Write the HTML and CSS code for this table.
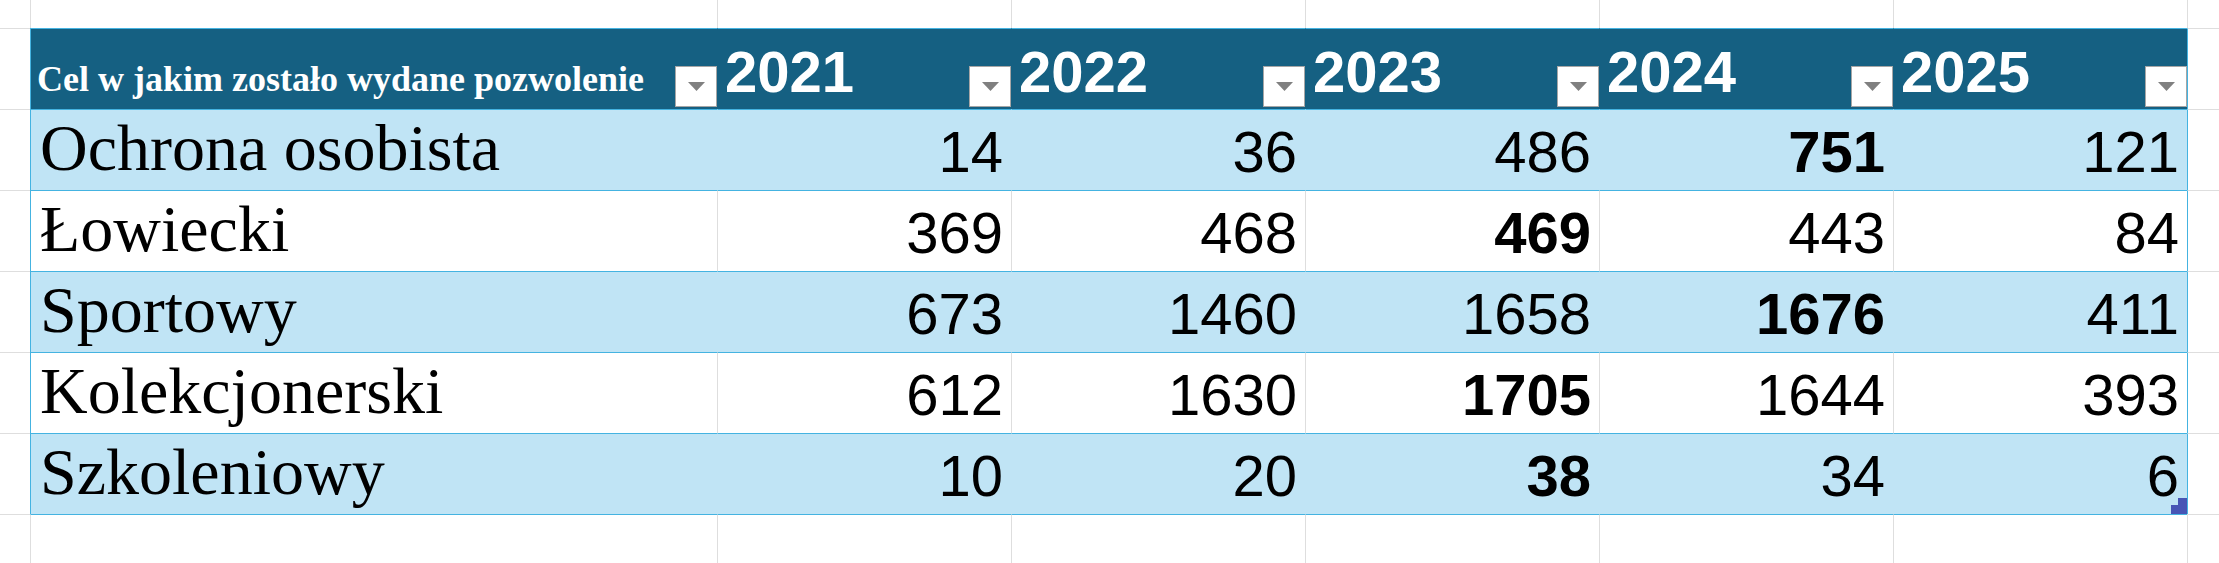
FILE: index.html
```html
<!DOCTYPE html>
<html lang="pl">
<head>
<meta charset="utf-8">
<title>Pozwolenia na broń</title>
<link rel="stylesheet" href="styles.css">
</head>
<body>
<div class="sheet">
  <!-- row 1 (above table) -->
  <div class="c col-a top-row"></div>
  <div class="c top-row"></div>
  <div class="c top-row"></div>
  <div class="c top-row"></div>
  <div class="c top-row"></div>
  <div class="c top-row"></div>
  <div class="c top-row"></div>
  <div class="c top-row"></div>

  <!-- header -->
  <div class="c col-a"></div>
  <div class="c t t-first hdr"><span class="hdr-label">Cel w jakim zostało wydane pozwolenie</span><span class="filter"><svg width="17" height="9" viewBox="0 0 17 9"><path d="M0 0H17L8.5 9Z"/></svg></span></div>
  <div class="c t hdr"><span class="hdr-year">2021</span><span class="filter"><svg width="17" height="9" viewBox="0 0 17 9"><path d="M0 0H17L8.5 9Z"/></svg></span></div>
  <div class="c t hdr"><span class="hdr-year">2022</span><span class="filter"><svg width="17" height="9" viewBox="0 0 17 9"><path d="M0 0H17L8.5 9Z"/></svg></span></div>
  <div class="c t hdr"><span class="hdr-year">2023</span><span class="filter"><svg width="17" height="9" viewBox="0 0 17 9"><path d="M0 0H17L8.5 9Z"/></svg></span></div>
  <div class="c t hdr"><span class="hdr-year">2024</span><span class="filter"><svg width="17" height="9" viewBox="0 0 17 9"><path d="M0 0H17L8.5 9Z"/></svg></span></div>
  <div class="c t hdr"><span class="hdr-year">2025</span><span class="filter"><svg width="17" height="9" viewBox="0 0 17 9"><path d="M0 0H17L8.5 9Z"/></svg></span></div>
  <div class="c t-right"></div>

  <!-- row: Ochrona osobista -->
  <div class="c col-a"></div>
  <div class="c t t-first band lbl">Ochrona osobista</div>
  <div class="c t band num">14</div>
  <div class="c t band num">36</div>
  <div class="c t band num">486</div>
  <div class="c t band num b">751</div>
  <div class="c t band num">121</div>
  <div class="c t-right"></div>

  <!-- row: Łowiecki -->
  <div class="c col-a"></div>
  <div class="c t t-first lbl">Łowiecki</div>
  <div class="c t num">369</div>
  <div class="c t num">468</div>
  <div class="c t num b">469</div>
  <div class="c t num">443</div>
  <div class="c t num">84</div>
  <div class="c t-right"></div>

  <!-- row: Sportowy -->
  <div class="c col-a"></div>
  <div class="c t t-first band lbl">Sportowy</div>
  <div class="c t band num">673</div>
  <div class="c t band num">1460</div>
  <div class="c t band num">1658</div>
  <div class="c t band num b">1676</div>
  <div class="c t band num">411</div>
  <div class="c t-right"></div>

  <!-- row: Kolekcjonerski -->
  <div class="c col-a"></div>
  <div class="c t t-first lbl">Kolekcjonerski</div>
  <div class="c t num">612</div>
  <div class="c t num">1630</div>
  <div class="c t num b">1705</div>
  <div class="c t num">1644</div>
  <div class="c t num">393</div>
  <div class="c t-right"></div>

  <!-- row: Szkoleniowy -->
  <div class="c col-a"></div>
  <div class="c t t-first band lbl">Szkoleniowy</div>
  <div class="c t band num">10</div>
  <div class="c t band num">20</div>
  <div class="c t band num b">38</div>
  <div class="c t band num">34</div>
  <div class="c t band num last">6<svg class="resize" width="16" height="16" viewBox="0 0 16 16"><path d="M7 0H16V16H0V7H7Z"/></svg></div>
  <div class="c t-right"></div>

  <!-- row below table -->
  <div class="c col-a"></div>
  <div class="c below"></div>
  <div class="c below"></div>
  <div class="c below"></div>
  <div class="c below"></div>
  <div class="c below"></div>
  <div class="c below"></div>
  <div class="c"></div>
</div>
</body>
</html>
```

FILE: styles.css
```css
:root {
  --grid: #dedede;
  --tb: #44b3e1;
  --hdr: #156082;
  --band: #c0e4f5;
}

html, body {
  margin: 0;
  padding: 0;
  background: #ffffff;
  overflow: hidden;
}

.sheet {
  display: grid;
  grid-template-columns: 30px 687px repeat(5, 294px) 1fr;
  grid-template-rows: 28px repeat(6, 81px) 1fr;
  width: 2219px;
  height: 563px;
}

.c {
  box-sizing: border-box;
  border-left: 1px solid var(--grid);
  border-top: 1px solid var(--grid);
  min-width: 0;
}

.col-a {
  border-left: none;
}

.top-row {
  border-top: none;
}

/* table cells */
.t {
  border-top-color: var(--tb);
}

.t-first {
  border-left-color: var(--tb) !important;
}

.t-right {
  border-left-color: var(--tb);
}

.below {
  border-top-color: var(--tb);
}

.hdr {
  background: var(--hdr);
  border-left-color: var(--hdr);
  color: #ffffff;
  display: flex;
  align-items: flex-end;
}

.band {
  background: var(--band);
  border-left-color: var(--band);
}

.hdr-label {
  font-family: "Liberation Serif", "Times New Roman", serif;
  font-weight: 700;
  font-size: 36px;
  line-height: 1;
  margin: 0 0 12px 6px;
  white-space: nowrap;
}

.hdr-year {
  font-family: "Liberation Sans", Arial, sans-serif;
  font-weight: 700;
  font-size: 58px;
  line-height: 1;
  margin: 0 0 8px 7px;
}

.filter {
  margin-left: auto;
  margin-bottom: 2px;
  box-sizing: border-box;
  width: 42px;
  height: 41px;
  background: #ffffff;
  border: 1px solid #a6a6a6;
  display: flex;
  justify-content: center;
  align-items: center;
}

.filter svg {
  display: block;
  fill: #808080;
}

.lbl {
  display: flex;
  align-items: flex-end;
  padding: 0 0 9px 9px;
  font-family: "Liberation Serif", "Times New Roman", serif;
  font-size: 66px;
  line-height: 1;
  color: #000000;
  white-space: nowrap;
}

.num {
  display: flex;
  justify-content: flex-end;
  align-items: flex-end;
  padding: 0 8px 9px 0;
  font-family: "Liberation Sans", Arial, sans-serif;
  font-size: 58px;
  line-height: 1;
  color: #000000;
}

.b {
  font-weight: 700;
}

.last {
  position: relative;
}

.resize {
  position: absolute;
  right: 0;
  bottom: 0;
  display: block;
  fill: #4755b5;
}
```
